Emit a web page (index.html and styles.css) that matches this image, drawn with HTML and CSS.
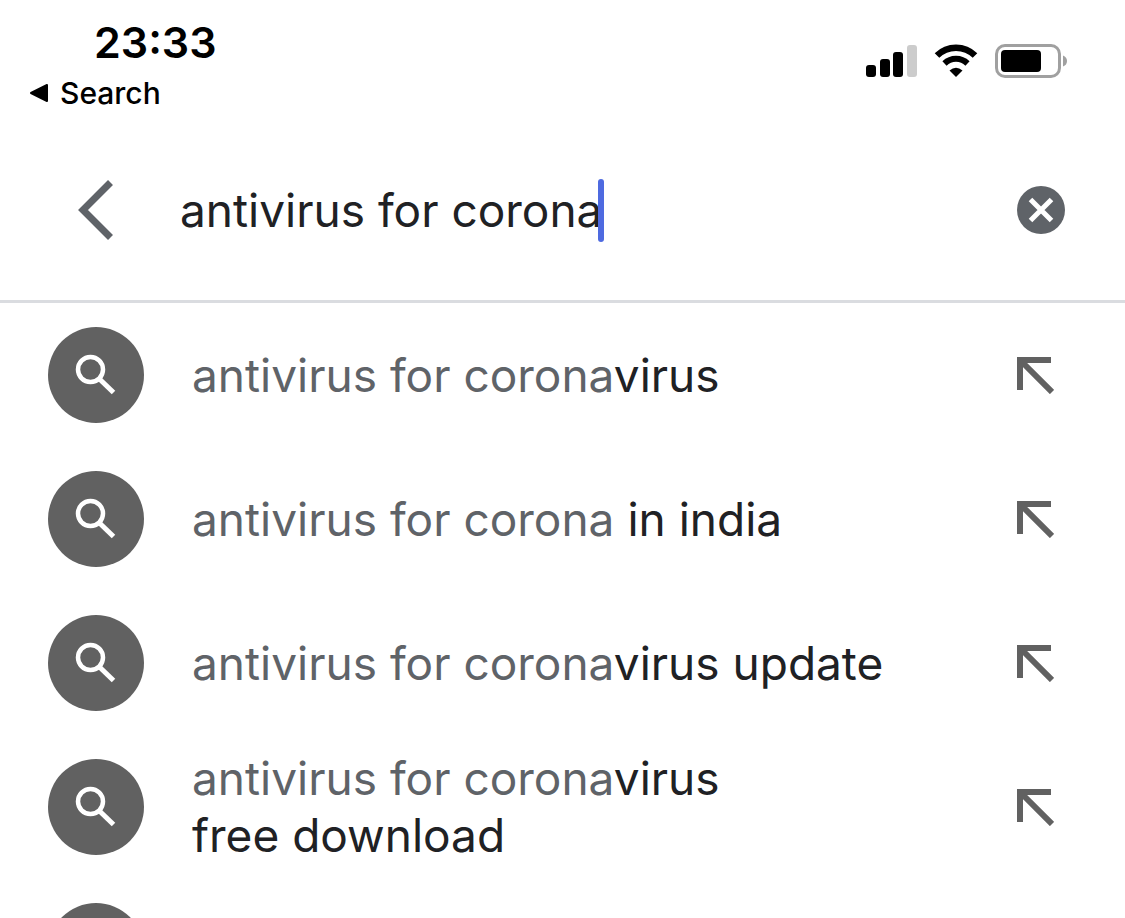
FILE: index.html
```html
<!DOCTYPE html>
<html lang="en">
<head>
    <meta charset="UTF-8">
    <meta name="viewport" content="width=device-width, initial-scale=1.0">
    <title>Search</title>
    <link rel="stylesheet" href="styles.css">
</head>
<body>
    <!-- icons used in every row -->
    <svg class="sprite" aria-hidden="true">
        <symbol id="search" viewBox="0 0 96 96">
            <circle cx="42.500" cy="42.500" r="12.500" fill="none" stroke="#fff" stroke-width="4.500"/>
            <path d="M52 52.500L65.500 65.500" stroke="#fff" stroke-width="5"/>
        </symbol>
        <symbol id="insert" viewBox="0 0 38 38">
            <path d="M4 34V4H35M5 5L36 36" fill="none" stroke="#616161" stroke-width="6"/>
        </symbol>
    </svg>

    <header class="status-bar">
        <div class="status-left">
            <div class="time">23:33</div>
            <a class="back-app" href="#">
                <svg width="20" height="20" viewBox="0 0 20 20">
                    <path d="M3 10L19 2V18Z" stroke="#000" stroke-width="2" stroke-linejoin="round"/>
                </svg>
                Search
            </a>
        </div>
        <div class="status-icons">
            <svg width="51" height="34" viewBox="0 0 51 34">
                <rect x="0" y="21" width="10" height="12" rx="3"/>
                <rect x="14" y="15" width="10" height="18" rx="3"/>
                <rect x="27" y="8" width="10" height="25" rx="3"/>
                <rect x="41" y="1" width="10" height="32" rx="3" fill="#ccc"/>
            </svg>
            <svg width="44" height="34" viewBox="0 0 44 34">
                <path d="M3 11.500A27 27 0 0 1 41 11.500" fill="none" stroke="#000" stroke-width="6.500"/>
                <path d="M10.500 19.500A16.500 16.500 0 0 1 33.500 19.500" fill="none" stroke="#000" stroke-width="6"/>
                <path d="M15.500 26.500Q22 21 28.500 26.500L22 33Z"/>
            </svg>
            <svg width="72" height="34" viewBox="0 0 72 34">
                <rect x="1.500" y="1.500" width="63" height="31" rx="8.500" fill="none" stroke="#a0a0a0" stroke-width="3"/>
                <rect x="6" y="6" width="40" height="22" rx="4"/>
                <path d="M68 11.500Q72 13 72 17T68 22.500Z" fill="#a0a0a0"/>
            </svg>
        </div>
    </header>

    <form class="search-bar">
        <button class="icon-button back" type="button" aria-label="Back">
            <svg width="36" height="60" viewBox="0 0 36 60">
                <path d="M32.500 2.500L5 30L32.500 57.500" fill="none" stroke="#5f6368" stroke-width="7"/>
            </svg>
        </button>
        <input class="query" type="text" aria-label="Search" value="antivirus for corona">
        <span class="caret"></span>
        <button class="icon-button clear" type="reset" aria-label="Clear">
            <svg width="48" height="48" viewBox="0 0 48 48">
                <circle cx="24" cy="24" r="24" fill="#5f6368"/>
                <path d="M13.500 13.500L34.500 34.500M34.500 13.500L13.500 34.500" stroke="#fff" stroke-width="5"/>
            </svg>
        </button>
    </form>

    <ul class="suggestions">
        <li class="suggestion">
            <svg class="round-icon"><use href="#search"/></svg>
            <a class="text" href="#">antivirus for corona<b>virus</b></a>
            <button class="icon-button" type="button" aria-label="Use suggestion"><svg width="38" height="38"><use href="#insert"/></svg></button>
        </li>
        <li class="suggestion">
            <svg class="round-icon"><use href="#search"/></svg>
            <a class="text" href="#">antivirus for corona<b> in india</b></a>
            <button class="icon-button" type="button" aria-label="Use suggestion"><svg width="38" height="38"><use href="#insert"/></svg></button>
        </li>
        <li class="suggestion">
            <svg class="round-icon"><use href="#search"/></svg>
            <a class="text" href="#">antivirus for corona<b>virus update</b></a>
            <button class="icon-button" type="button" aria-label="Use suggestion"><svg width="38" height="38"><use href="#insert"/></svg></button>
        </li>
        <li class="suggestion">
            <svg class="round-icon"><use href="#search"/></svg>
            <a class="text" href="#">antivirus for corona<b>virus<br>free download</b></a>
            <button class="icon-button" type="button" aria-label="Use suggestion"><svg width="38" height="38"><use href="#insert"/></svg></button>
        </li>
        <li class="suggestion">
            <svg class="round-icon"><use href="#search"/></svg>
        </li>
    </ul>
</body>
</html>
```
FILE: styles.css
```css
* {
    box-sizing: border-box;
}
body {
    margin: 0;
    height: 100vh;
    overflow: hidden;
    background-color: #fff;
    color: #202124;
    font-family: Inter, "Liberation Sans", sans-serif;
    font-size: 46px;
    line-height: 57px;
}
svg {
    display: block;
    flex: none;
}
.sprite {
    display: none;
}
.status-bar {
    display: flex;
    justify-content: space-between;
    height: 120px;
    padding: 16px 58px 0 28px;
    color: #000;
}
.time {
    padding-left: 66px;
    font-size: 43px;
    font-weight: 600;
    line-height: 52px;
}
.back-app {
    display: flex;
    align-items: center;
    gap: 12px;
    padding-top: 6px;
    color: #000;
    font-size: 30px;
    font-weight: 500;
    line-height: 38px;
    text-decoration: none;
}
.status-icons {
    display: flex;
    gap: 17px;
    padding-top: 28px;
}
.search-bar {
    display: flex;
    align-items: center;
    height: 183px;
    padding: 0 60px 0 78px;
    border-bottom: 3px solid #dadce0;
}
.icon-button {
    flex: none;
    padding: 0;
    border: none;
    background: none;
    cursor: pointer;
}
.back {
    margin-right: 66px;
}
.query {
    width: 424px;
    height: 60px;
    padding: 0;
    border: none;
    outline: none;
    color: inherit;
    font: inherit;
}
.caret {
    width: 6px;
    height: 63px;
    margin-left: -6px;
    border-radius: 3px;
    background-color: #4e6ae0;
}
.clear {
    margin-left: auto;
}
.suggestions {
    margin: 0;
    padding: 0;
    list-style: none;
}
.suggestion {
    display: flex;
    align-items: center;
    gap: 48px;
    height: 144px;
    padding: 0 71px 0 48px;
}
.round-icon {
    width: 96px;
    height: 96px;
    border-radius: 50%;
    background-color: #616161;
}
.text {
    flex: 1;
    color: #5f6368;
    text-decoration: none;
}
.text b {
    color: #202124;
    font-weight: 400;
}
```
